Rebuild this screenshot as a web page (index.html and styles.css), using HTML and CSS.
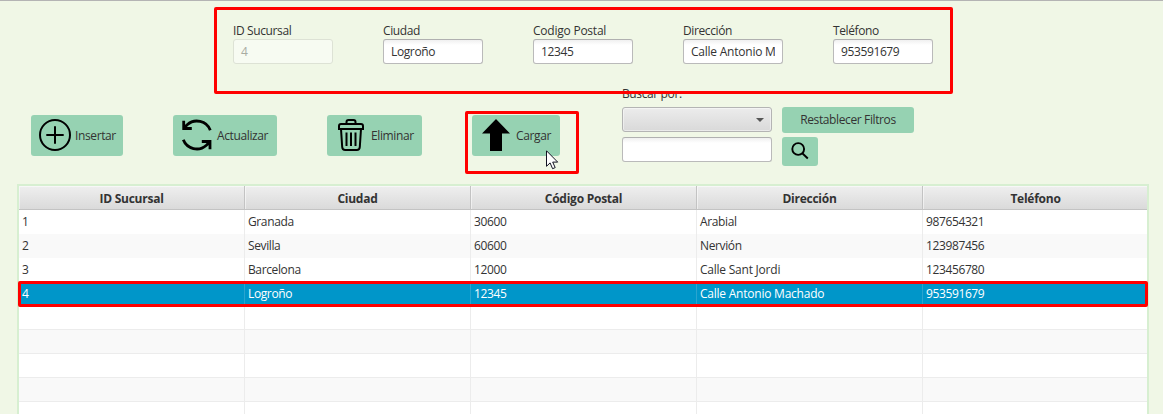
FILE: index.html
```html
<!DOCTYPE html>
<html lang="es">
<head>
<meta charset="utf-8">
<title>Sucursales</title>
<link rel="stylesheet" href="styles.css">
</head>
<body>
<div class="window">
  <form class="fields">
    <div class="field"><span class="label">ID Sucursal</span><div class="input disabled">4</div></div>
    <div class="field"><span class="label">Ciudad</span><div class="input">Logroño</div></div>
    <div class="field"><span class="label wide">Codigo Postal</span><div class="input">12345</div></div>
    <div class="field"><span class="label">Dirección</span><div class="input"><span class="clip wide">Calle Antonio M</span></div></div>
    <div class="field"><span class="label">Teléfono</span><div class="input">953591679</div></div>
  </form>

  <div class="toolbar">
    <div class="button insert">
      <svg width="32" height="32" viewBox="0 0 32 32" fill="none" stroke="#000" stroke-width="2"><circle cx="16" cy="16" r="15"/><path d="M16 7.3v17.4M7.3 16h17.4"/></svg>
      <span>Insertar</span>
    </div>
    <div class="button update">
      <svg width="32" height="32" viewBox="0 0 32 32" fill="none" stroke="#000" stroke-width="2.800"><path d="M29.300 11.200A14.400 14.400 0 0 0 6.200 5.800L3 9M2.700 1.800V9.500H10.800M2.300 20.800A14.400 14.400 0 0 0 25.400 26.200L28.600 23M29 30.200V22.500H20.800"/></svg>
      <span>Actualizar</span>
    </div>
    <div class="button delete">
      <svg width="32" height="32" viewBox="0 0 32 32" fill="none" stroke="#000" stroke-width="2"><path d="M11.500 5V3q0-2 2-2h5q2 0 2 2v2M6 5h20q2 0 2 2v3H4V7q0-2 2-2zM6 10l1.200 18q.2 3 3 3h11.600q2.800 0 3-3L26 10M11.500 13.500v13.500M16 13.500v13.500M20.500 13.500v13.500"/></svg>
      <span>Eliminar</span>
    </div>
    <div class="button load">
      <svg width="32" height="32" viewBox="0 0 32 32"><path d="M16 0 30 14.500H22V32H10V14.500H2z"/></svg>
      <span>Cargar</span>
    </div>
    <div class="search">
      <span class="label">Buscar por:</span>
      <div class="search-row">
        <div class="combo"><svg width="8" height="4" viewBox="0 0 8 4"><path d="M0 0h8L4 4z" fill="#555"/></svg></div>
        <div class="button reset"><span>Restablecer Filtros</span></div>
      </div>
      <div class="search-row">
        <div class="input query"></div>
        <div class="button find"><svg width="18" height="18" viewBox="0 0 18 18" fill="none" stroke="#000" stroke-width="1.900"><circle cx="7.200" cy="7" r="5.900"/><path d="m11.300 11.200 5.500 5.300"/></svg></div>
      </div>
    </div>
  </div>

  <div class="table">
    <div class="row head"><div>ID Sucursal</div><div>Ciudad</div><div>Código Postal</div><div>Dirección</div><div>Teléfono</div></div>
    <div class="row"><div>1</div><div>Granada</div><div>30600</div><div>Arabial</div><div>987654321</div></div>
    <div class="row"><div>2</div><div>Sevilla</div><div>60600</div><div>Nervión</div><div>123987456</div></div>
    <div class="row"><div>3</div><div>Barcelona</div><div>12000</div><div class="wide">Calle Sant Jordi</div><div>123456780</div></div>
    <div class="row selected"><div>4</div><div>Logroño</div><div>12345</div><div class="wide">Calle Antonio Machado</div><div>953591679</div></div>
    <div class="row"><div></div><div></div><div></div><div></div><div></div></div>
    <div class="row"><div></div><div></div><div></div><div></div><div></div></div>
    <div class="row"><div></div><div></div><div></div><div></div><div></div></div>
    <div class="row"><div></div><div></div><div></div><div></div><div></div></div>
    <div class="row"><div></div><div></div><div></div><div></div><div></div></div>
  </div>

  <div class="mark mark-fields"></div>
  <div class="mark mark-load"></div>
  <div class="mark mark-row"></div>
  <svg class="cursor" width="13" height="20" viewBox="0 0 13 20"><path d="M.5.8v15.500l3.600-3.400 2.500 5.800 2.600-1.100-2.500-5.500h5z" fill="#fff" stroke="#112" stroke-width="1"/></svg>
</div>
</body>
</html>
```
FILE: styles.css
```css
* { box-sizing: border-box; }

body {
  margin: 0;
  font: 12px/16px "Open Sans", "Noto Sans", sans-serif;
  letter-spacing: -0.38px;
  color: #333;
}

.window {
  position: relative;
  height: 414px;
  overflow: hidden;
  background: #f0f7e6;
  border-top: 1px solid #b4b4b4;
  white-space: nowrap;
}

.window svg { display: block; flex: none; }

.fields {
  display: flex;
  gap: 50px;
  margin: 0;
  padding: 22px 0 0 233px;
}

.field { width: 100px; }
.label { display: block; height: 16px; }

.input {
  height: 25px;
  padding: 4px 7px;
  border: 1px solid #bababa;
  border-top-color: #b0b0b0;
  border-radius: 3px;
  background: linear-gradient(#f0f0f0, #fff 5px);
}
.disabled {
  color: #a8aca2;
  border-color: #dde2d5;
  background: #f7fbf2;
}
.clip { display: block; overflow: hidden; }
.wide { letter-spacing: -0.23px; }

.toolbar {
  display: flex;
  align-items: flex-start;
  height: 120px;
  padding: 22px 0 0 31px;
}

.button {
  display: flex;
  align-items: center;
  height: 41px;
  margin-top: 29px;
  padding-left: 8px;
  gap: 4px;
  border-radius: 3px;
  background: #96d2b2;
}
.insert { width: 92px; }
.update { width: 104px; margin-left: 50px; }
.delete { width: 95px; margin-left: 50px; }
.load { width: 88px; margin-left: 50px; }
.button svg { margin-bottom: 1px; }

.search { margin-left: 62px; }
.search .label { height: 21px; }
.search-row {
  display: flex;
  gap: 10px;
  height: 30px;
}
.combo {
  display: flex;
  align-items: center;
  justify-content: flex-end;
  width: 150px;
  height: 25px;
  padding-right: 7px;
  border: 1px solid #b4b4b4;
  border-radius: 3px;
  background: linear-gradient(#ececec, #d9d9d9);
  box-shadow: inset 0 0 0 1px rgba(255, 255, 255, .45);
}
.query { width: 150px; }
.search .button { margin: 0; padding: 0; justify-content: center; }
.reset { width: 132px; height: 26px; }
.find { width: 36px; height: 29px; }

.table {
  width: 1132px;
  height: 240px;
  margin-left: 17px;
  border: 2px solid #d7efd1;
  background: #fff;
}
.row {
  display: grid;
  grid-template-columns: repeat(5, 226px);
  width: 1128px;
  height: 24px;
  overflow: hidden;
  background: #fff;
}
.row:nth-child(odd) { background: #f9f9f9; }
.row > div {
  padding: 4px 3px;
  border-right: 1px solid #ececec;
  border-bottom: 1px solid #ececec;
}
.row.head {
  background: linear-gradient(#efefef, #d9d9d9);
  font-weight: 700;
  letter-spacing: -0.25px;
  text-align: center;
}
.row.head > div {
  padding: 5px 3px 2px;
  border-color: #c3c3c3;
  box-shadow: inset 1px 1px rgba(255, 255, 255, .5);
}
.row.selected { background: #0096c9; color: #fff; }
.row.selected > div { border-color: #2aa4cf; }

.mark {
  position: absolute;
  border: 3px solid #f00;
  border-radius: 2px;
}
.mark-fields { left: 214px; top: 6px; width: 739px; height: 87px; }
.mark-load { left: 465px; top: 110px; width: 114px; height: 63px; }
.mark-row { left: 18px; top: 280px; width: 1130px; height: 26px; }
.cursor { position: absolute; left: 546px; top: 149px; }
```
